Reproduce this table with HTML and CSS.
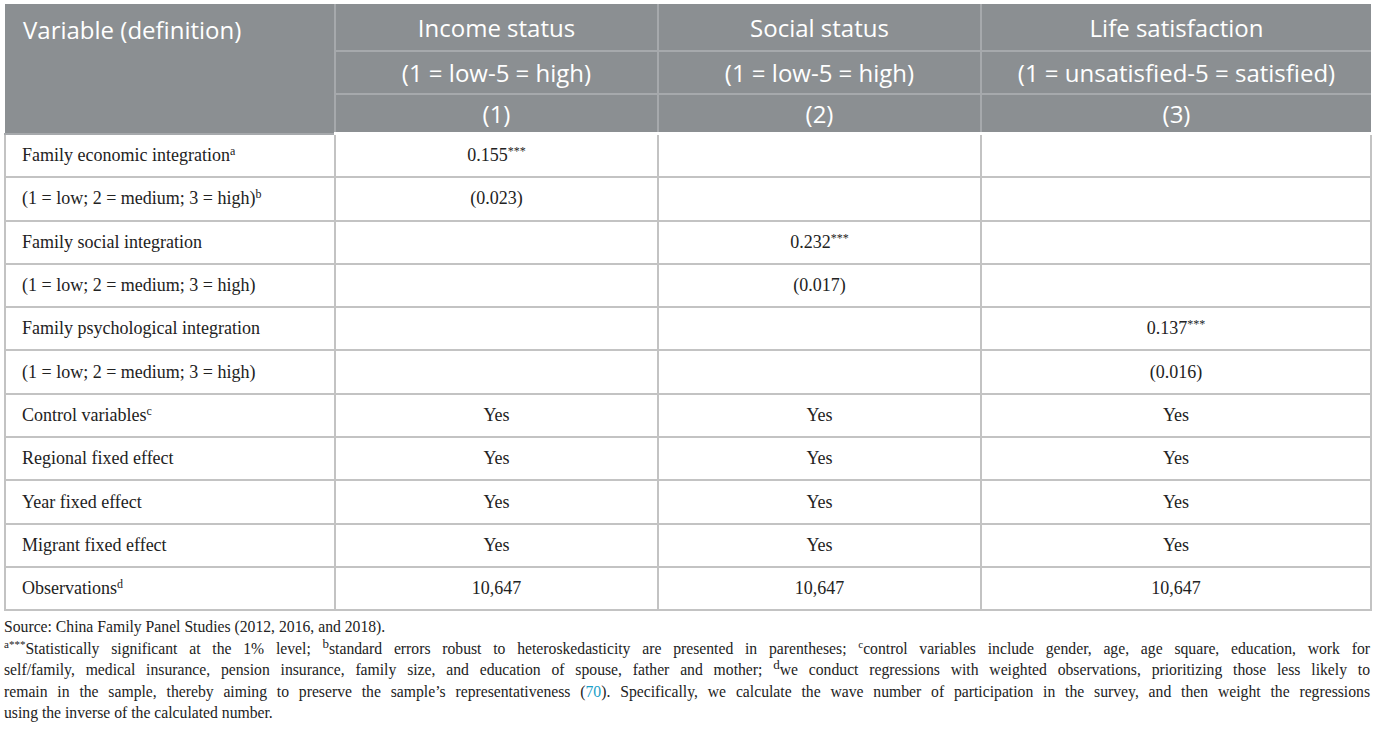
FILE: index.html
```html
<!DOCTYPE html>
<html lang="en">
<head>
    <meta charset="UTF-8">
    <meta name="viewport" content="width=device-width, initial-scale=1.0">
    <title>Regression results</title>
    <link rel="stylesheet" href="styles.css">
</head>
<body>
    <div class="table-wrap">
        <table class="reg-table">
            <colgroup>
                <col class="col-var">
                <col class="col-num">
                <col class="col-num">
                <col class="col-last">
            </colgroup>
            <thead>
                <tr class="head-1">
                    <th rowspan="3" class="var-head">Variable (definition)</th>
                    <th>Income status</th>
                    <th>Social status</th>
                    <th>Life satisfaction</th>
                </tr>
                <tr class="head-2">
                    <th>(1 = low-5 = high)</th>
                    <th>(1 = low-5 = high)</th>
                    <th>(1 = unsatisfied-5 = satisfied)</th>
                </tr>
                <tr class="head-3">
                    <th>(1)</th>
                    <th>(2)</th>
                    <th>(3)</th>
                </tr>
            </thead>
            <tbody>
                <tr>
                    <td>Family economic integration<sup>a</sup></td>
                    <td>0.155<sup>***</sup></td>
                    <td></td>
                    <td></td>
                </tr>
                <tr>
                    <td>(1 = low; 2 = medium; 3 = high)<sup>b</sup></td>
                    <td>(0.023)</td>
                    <td></td>
                    <td></td>
                </tr>
                <tr>
                    <td>Family social integration</td>
                    <td></td>
                    <td>0.232<sup>***</sup></td>
                    <td></td>
                </tr>
                <tr>
                    <td>(1 = low; 2 = medium; 3 = high)</td>
                    <td></td>
                    <td>(0.017)</td>
                    <td></td>
                </tr>
                <tr>
                    <td>Family psychological integration</td>
                    <td></td>
                    <td></td>
                    <td>0.137<sup>***</sup></td>
                </tr>
                <tr>
                    <td>(1 = low; 2 = medium; 3 = high)</td>
                    <td></td>
                    <td></td>
                    <td>(0.016)</td>
                </tr>
                <tr>
                    <td>Control variables<sup>c</sup></td>
                    <td>Yes</td>
                    <td>Yes</td>
                    <td>Yes</td>
                </tr>
                <tr>
                    <td>Regional fixed effect</td>
                    <td>Yes</td>
                    <td>Yes</td>
                    <td>Yes</td>
                </tr>
                <tr>
                    <td>Year fixed effect</td>
                    <td>Yes</td>
                    <td>Yes</td>
                    <td>Yes</td>
                </tr>
                <tr>
                    <td>Migrant fixed effect</td>
                    <td>Yes</td>
                    <td>Yes</td>
                    <td>Yes</td>
                </tr>
                <tr>
                    <td>Observations<sup>d</sup></td>
                    <td>10,647</td>
                    <td>10,647</td>
                    <td>10,647</td>
                </tr>
            </tbody>
        </table>

        <div class="notes">
            <p>Source: China Family Panel Studies (2012, 2016, and 2018).</p>
            <p>
                <span class="line"><sup>a</sup><sup>***</sup>Statistically significant at the 1% level; <sup class="big">b</sup>standard errors robust to heteroskedasticity are presented in parentheses; <sup>c</sup>control variables include gender, age, age square, education, work for</span>
                <span class="line">self/family, medical insurance, pension insurance, family size, and education of spouse, father and mother; <sup class="big">d</sup>we conduct regressions with weighted observations, prioritizing those less likely to</span>
                <span class="line">remain in the sample, thereby aiming to preserve the sample’s representativeness (<a href="#ref70">70</a>). Specifically, we calculate the wave number of participation in the survey, and then weight the regressions</span>
                <span class="line last">using the inverse of the calculated number.</span>
            </p>
        </div>
    </div>
</body>
</html>
```

FILE: styles.css
```css
body {
    margin: 0;
    padding: 4px 5px 0 4px;
    background: #fff;
    color: #222;
    font-family: "Liberation Serif", "Times New Roman", serif;
}
.reg-table {
    width: 1366px;
    border-collapse: collapse;
    table-layout: fixed;
}
.col-var { width: 330px; }
.col-num { width: 323px; }
.col-last { width: 390px; }

/* cabecalho cinza */
.reg-table thead th {
    background-color: #8b8f92;
    color: #fff;
    font-family: "Open Sans", Lato, sans-serif;
    font-weight: 400;
    font-size: 24px;
    text-align: center;
    padding: 0 6px;
    border: 2px solid #a6a9ac;
    border-top: none;
}
.reg-table thead tr:last-child th {
    border-bottom: 3px solid #fff;
    box-shadow: inset 0 -1px 0 #8b8f92;
}
.head-1 th { height: 46px; }
.head-2 th { height: 41px; }
.head-3 th { height: 37px; }
.reg-table thead th.var-head {
    text-align: left;
    vertical-align: top;
    padding: 9px 18px 0;
    border-left: none;
}
.reg-table thead th:last-child {
    border-right: none;
}

/* corpo */
.reg-table td {
    border: 2px solid #c3c3c3;
    height: 41.3px;
    padding: 0 16px;
    font-size: 18px;
    text-align: center;
    vertical-align: middle;
}
.reg-table tbody tr:first-child td {
    border-top: 2px solid #c9c9c9;
}
.reg-table td:first-child {
    text-align: left;
}
sup {
    font-size: 12px;
    line-height: 0;
    vertical-align: 6px;
}

/* notas de rodape */
.notes {
    padding-top: 5px;
    font-size: 15.7px;
    line-height: 21.5px;
    color: #222;
}
.notes p {
    margin: 0;
}
.notes .line {
    display: block;
    text-align: justify;
    text-align-last: justify;
}
.notes .line.last {
    text-align-last: left;
}
.notes sup {
    font-size: 11px;
}
.notes sup.big {
    font-size: 13px;
}
.notes a {
    color: #1aa0c8;
    text-decoration: none;
}
```
